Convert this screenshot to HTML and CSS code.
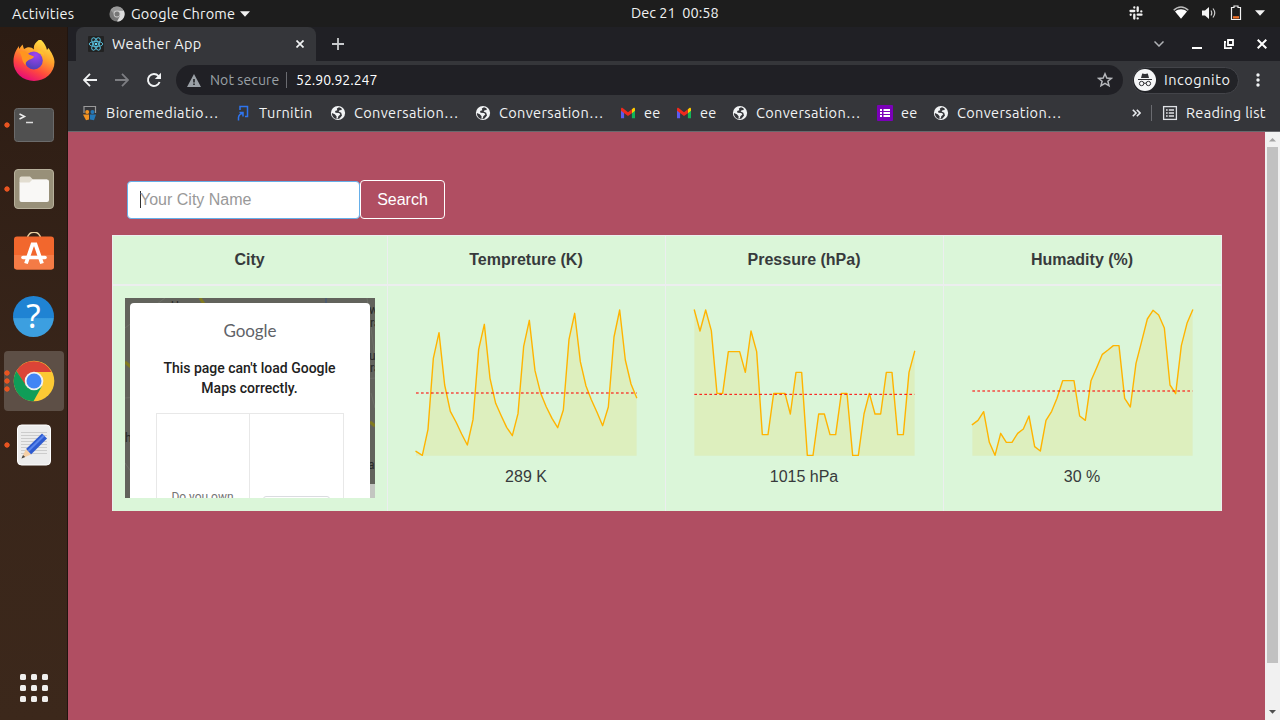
FILE: index.html
```html
<!DOCTYPE html>
<html lang="en">
<head>
<meta charset="utf-8">
<title>Weather App</title>
<link rel="stylesheet" href="styles.css">
</head>
<body>
<svg class="defs" width="0" height="0">
  <defs>
    <symbol id="globe" viewBox="0 0 16 16"><circle cx="8" cy="8" r="7.1" fill="#f1f3f4"/><path d="M9 2.2 6.8 3.6 7.3 5.2 5.1 6 5.4 7.8 9.2 8 10.3 9.6 8.3 11.2 7.8 13.6 6.4 13.8 6.6 11.3 4.8 9.3 1.9 7.9C1.8 11.4 4.4 14.1 8 14.1L9.6 13.4 12 10.6 11.2 7.8 8.6 6.5 9.6 5.3 11.8 5 11.4 3.2Z" fill="#35363a"/></symbol>
    <symbol id="gmail" viewBox="0 0 16 16"><path d="M1 4.2V13.2H4.1V7Z" fill="#5b5bf0"/><path d="M15 4.2V13.2H11.9V7Z" fill="#12b45a"/><path d="M11.9 4.2 13.4 3C14.2 2.5 15 3 15 4V5.8L11.9 8.2Z" fill="#fc0"/><path d="M1 4C1 3 1.8 2.5 2.6 3L8 7.2 11.9 4.2V8.2L8 11.1 1 5.8Z" fill="#f02a1d"/></symbol>
    <symbol id="chrome" viewBox="0 0 42 42"><circle cx="21" cy="21" r="20.3" fill="#fcc934"/><path d="M3.4 10.9A20.3 20.3 0 0 1 38.6 11.9L21 12 12.5 25.5Z" fill="#db4437"/><path d="M3.4 10.9A20.3 20.3 0 0 0 20.5 41.3L29 26 21 30 13 25.5Z" fill="#0f9d58"/><circle cx="21" cy="21" r="9.3" fill="#f1f1f1"/><circle cx="21" cy="21" r="7.5" fill="#4285f4"/></symbol>
  </defs>
</svg>
<div class="desktop">
  <header class="topbar">
    <span class="activities">Activities</span>
    <svg class="app-icon" width="16" height="16" viewBox="0 0 16 16"><circle cx="8" cy="8" r="7.6" fill="#777"/><path d="M8 4.5H14.8A7.6 7.6 0 0 1 8 15.6L11 10Z" fill="#ddd"/><path d="M1.500 4A7.6 7.6 0 0 1 14.6 4.4H8L5 8Z" fill="#999"/><circle cx="8" cy="8" r="3.4" fill="#ccc"/><circle cx="8" cy="8" r="2.5" fill="#777"/></svg>
    <span class="app-name">Google Chrome</span>
    <svg class="caret" width="10" height="6" viewBox="0 0 10 6"><path d="M0 .3H10L5 5.8Z" fill="#f2f2f2"/></svg>
    <span class="clock">Dec 21&nbsp; 00:58</span>
    <div class="tray">
      <svg width="14" height="14" viewBox="0 0 14 14" stroke="#f2f2f2" stroke-width="2.3" stroke-linecap="round" fill="none"><path d="M5.300 1.500V1.600M5.300 5H1.500M8.700 1.500V5M12.300 5.300V5.400M1.700 8.700V8.800M5.300 8.700V12.500M8.700 8.700H12.500M8.700 12.300V12.400"/></svg>
      <svg class="wifi" width="16" height="14" viewBox="0 0 16 14"><path d="M.7 4.3C5-.1 11-.1 15.3 4.3" fill="none" stroke="#bbb" stroke-width="1.4"/><path d="M2 5.5C5.5 2.6 10.5 2.6 14 5.5L8 12.700Z" fill="#fff"/></svg>
      <svg class="vol" width="16" height="14" viewBox="0 0 16 14"><path d="M1 4.5H4L8 1V13L4 9.500H1Z" fill="#f4f4f4"/><path d="M10 4.5Q11.5 7 10 9.500M12 2.500Q15.500 7 12 11.500" fill="none" stroke="#ccc" stroke-width="1.2"/></svg>
      <svg class="bat" width="12" height="16" viewBox="0 0 12 16"><path d="M1.500 2.500H4V1H8V2.500H10.500V14.500H1.500Z" fill="none" stroke="#f2f2f2" stroke-width="1.2"/><path d="M3 11.200H9V13.500H3Z" fill="#f37329"/></svg>
      <svg class="caret" width="10" height="6" viewBox="0 0 10 6"><path d="M0 .3H10L5 5.8Z" fill="#f2f2f2"/></svg>
    </div>
  </header>
  <div class="workspace">
    <nav class="dock">
      <div class="slot"><svg width="42" height="42" viewBox="0 0 42 42">
        <defs><linearGradient id="ff" x1=".8" y1="0" x2=".3" y2="1"><stop offset="0" stop-color="#fff04a"/><stop offset=".4" stop-color="#ffa12b"/><stop offset=".7" stop-color="#ff4a3d"/><stop offset="1" stop-color="#e4067d"/></linearGradient><radialGradient id="fp" cx=".6" cy=".2" r=".8"><stop offset="0" stop-color="#a044f0"/><stop offset="1" stop-color="#5040b8"/></radialGradient></defs>
        <path d="M27 -1C31 2 33 6 34 10L35.500 8C38 12 41.500 17 41.500 22A20.500 19 0 0 1 .5 22C.3 15 3 10 6 6V9L9.500 4.500 11 9 14 7.500C17 7 19 7.500 21 9.500 20 5 23 2 27 -1Z" fill="url(#ff)"/><circle cx="20.8" cy="20.500" r="9" fill="url(#fp)"/><path d="M6 11.500C11 10.500 14 11.500 16 14.500L21 16.500C20 19.500 17 18.500 15 20.500 13 21.500 12 23.500 13 25.500 8 21.500 10 16.500 6 11.500Z" fill="#ff951f"/><path d="M23 11C27 9 31 12 31 16 30 14 28 13 26 13Z" fill="#ffc22f"/></svg></div>
      <div class="slot run1"><svg width="42" height="42" viewBox="0 0 42 42"><rect x="1.5" y="4.5" width="39" height="33" rx="3" fill="#505050" stroke="#6b6b6b"/><path d="M6.500 10 11.500 12.500 6.500 15" fill="none" stroke="#eee" stroke-width="1.5"/><path d="M13 18.500H20" stroke="#ddd" stroke-width="1.5"/></svg></div>
      <div class="slot run1"><svg width="42" height="42" viewBox="0 0 42 42"><rect x="1.5" y="1.5" width="39" height="39" rx="3.5" fill="#989079" stroke="#b7b09b"/><path d="M6.500 13V10.500Q6.500 8.500 8.500 8.500H17L20 11.500H34V15H6.500Z" fill="#e2ddd0"/><path d="M6.500 14.500H16.500L19.500 11.500H34Q36 11.500 36 13.500V32Q36 34 34 34H8.500Q6.500 34 6.500 32Z" fill="#f9f8f6"/></svg></div>
      <div class="slot"><svg width="42" height="42" viewBox="0 0 42 42"><path d="M14.500 7C14 -2 28 -2 27.500 7" fill="none" stroke="#e8cfa0" stroke-width="1.5"/><rect x="1" y="4.5" width="40" height="33" rx="3" fill="#f2672d"/><path d="M1 23H41V34.500Q41 37.500 38 37.500H4Q1 37.500 1 34.500Z" fill="#f47b46"/><path d="M13 31.500 19.500 12.500H22.500L29 31.500" fill="none" stroke="#fff" stroke-width="3.8"/><path d="M10 25.500H32" stroke="#fff" stroke-width="3.6" stroke-linecap="round"/></svg></div>
      <div class="slot"><div class="help">?</div></div>
      <div class="slot active run3"><svg width="42" height="42"><use href="#chrome"/></svg></div>
      <div class="slot run1"><svg width="42" height="42" viewBox="0 0 42 42"><rect x="4.5" y="1" width="33" height="40" rx="4" fill="#ececec" stroke="#fff"/><path d="M8 8.500H34M8 11.500H34M8 14.500H34M8 17.500H34M8 20.500H34M8 23.500H34M8 26.500H34M8 29.500H34" stroke="#c4c4c4" stroke-width=".8"/><path d="M13 25 29 9.500 34 14.500 18 30.500Z" fill="#2e5bd0"/><path d="M15 27.200 31 11.500" stroke="#5a85ec" stroke-width="2"/><path d="M13 25 18 30.500 8.500 34.500Z" fill="#f5cfa6"/><path d="M8.500 34.500 10 31 12.200 33Z" fill="#444"/></svg></div>
      <svg class="apps" width="28" height="28" viewBox="0 0 28 28" fill="#f0efed"><rect width="6" height="6" rx="1.5"/><rect x="11" width="6" height="6" rx="1.5"/><rect x="22" width="6" height="6" rx="1.5"/><rect y="11" width="6" height="6" rx="1.5"/><rect x="11" y="11" width="6" height="6" rx="1.5"/><rect x="22" y="11" width="6" height="6" rx="1.5"/><rect y="22" width="6" height="6" rx="1.5"/><rect x="11" y="22" width="6" height="6" rx="1.5"/><rect x="22" y="22" width="6" height="6" rx="1.5"/></svg>
    </nav>
    <main class="browser">
      <div class="tabstrip">
        <div class="tab">
          <svg width="16" height="16" viewBox="0 0 16 16"><rect width="16" height="16" rx="1" fill="#222"/><g fill="none" stroke="#56b8d4" stroke-width="1"><ellipse cx="8" cy="8" rx="6.8" ry="2.6"/><ellipse cx="8" cy="8" rx="6.8" ry="2.6" transform="rotate(60 8 8)"/><ellipse cx="8" cy="8" rx="6.8" ry="2.6" transform="rotate(120 8 8)"/></g><circle cx="8" cy="8" r="1.3" fill="#61dafb"/></svg>
          <span class="tab-title">Weather App</span>
          <svg width="8" height="8" viewBox="0 0 8 8"><path d="M.5.5 7.500 7.500M7.500.5.5 7.500" stroke="#f1f3f4" stroke-width="1.7"/></svg>
        </div>
        <svg class="newtab" width="12" height="12" viewBox="0 0 12 12"><path d="M6 0V12M0 6H12" stroke="#c8cacd" stroke-width="1.8"/></svg>
        <div class="wincontrols">
          <svg width="10" height="6" viewBox="0 0 10 6"><path d="M.5.5 5 5 9.500.5" fill="none" stroke="#b0b2b6" stroke-width="1.5"/></svg>
          <svg width="10" height="10" viewBox="0 0 10 10"><path d="M0 9H10" stroke="#fff" stroke-width="2"/></svg>
          <svg width="10" height="10" viewBox="0 0 10 10"><path d="M4 1H9V6H4ZM2 3H.8V9.200H7V8" fill="none" stroke="#fff" stroke-width="1.8"/></svg>
          <svg width="10" height="10" viewBox="0 0 10 10"><path d="M.7.7 9.300 9.300M9.300.7.7 9.300" stroke="#fff" stroke-width="2"/></svg>
        </div>
      </div>
      <div class="toolbar">
        <svg width="14" height="14" viewBox="0 0 14 14"><path d="M14 7H1.500M7 .8.9 7 7 13.200" fill="none" stroke="#f1f3f4" stroke-width="1.8"/></svg>
        <svg width="14" height="14" viewBox="0 0 14 14"><path d="M0 7H12.500M7 .8 13.100 7 7 13.200" fill="none" stroke="#7d7e82" stroke-width="1.8"/></svg>
        <svg width="16" height="16" viewBox="0 0 16 16"><path d="M13.600 10A6 6 0 1 1 12.500 4L14 5.500" fill="none" stroke="#f1f3f4" stroke-width="1.9"/><path d="M15 .8V7H8.800Z" fill="#f1f3f4"/></svg>
        <div class="omnibox">
          <svg width="14" height="13" viewBox="0 0 14 13"><path d="M7 0 14 13H0Z" fill="#9aa0a6"/><path d="M6.200 5H7.800V8.500H6.200ZM6.200 9.500H7.800V11H6.200Z" fill="#202124"/></svg>
          <span class="notsecure">Not secure</span><i class="bar"></i><span class="url">52.90.92.247</span>
          <svg class="star" width="16" height="16" viewBox="0 0 16 16"><path d="M8 1.800 9.800 6 14.300 6.400 10.900 9.300 12 13.800 8 11.400 4 13.800 5.100 9.300 1.700 6.400 6.200 6Z" fill="none" stroke="#b6b8bc" stroke-width="1.5"/></svg>
        </div>
        <div class="incog"><svg width="22" height="22" viewBox="0 0 22 22"><circle cx="11" cy="11" r="11" fill="#f5f6f7"/><path d="M7 9 8.200 4.600 11 5 13.800 4.600 15 9Z" fill="#303135"/><path d="M4 10.500H18" stroke="#303135" stroke-width="1"/><g fill="none" stroke="#303135"><circle cx="7.6" cy="14.5" r="2.2"/><circle cx="14.4" cy="14.5" r="2.2"/><path d="M9.800 14.200H12.200"/></g></svg><span>Incognito</span></div>
        <svg class="kebab" width="4" height="14" viewBox="0 0 4 14" fill="#f1f3f4"><circle cx="2" cy="2" r="1.7"/><circle cx="2" cy="7" r="1.7"/><circle cx="2" cy="12" r="1.7"/></svg>
      </div>
      <div class="bookmarks">
        <div class="bm"><svg width="16" height="16" viewBox="0 0 16 16"><path d="M2 8V1.500H13.500V8" fill="none" stroke="#9a9a9a" stroke-width="1.2"/><circle cx="5.2" cy="7" r="2" fill="#f39322"/><path d="M1 9.500H7V14.500L4 15.200Z" fill="#f39322"/><circle cx="10.5" cy="7" r="2" fill="#2378b9"/><path d="M8 9.500H14L12 15.200 8 14.500Z" fill="#2378b9"/></svg><span class="wide">Bioremediatio…</span></div>
        <div class="bm"><svg width="16" height="16" viewBox="0 0 16 16" fill="none" stroke="#2f75ee" stroke-width="1.5"><path d="M5 5V1.500H12.500V11.500H10M3.500 15.500V12.500Q4 9 7.500 8.500M4.500 7.500H8V11.500"/></svg><span>Turnitin</span></div>
        <div class="bm"><svg width="16" height="16"><use href="#globe"/></svg><span>Conversation…</span></div>
        <div class="bm"><svg width="16" height="16"><use href="#globe"/></svg><span>Conversation…</span></div>
        <div class="bm"><svg width="16" height="16"><use href="#gmail"/></svg><span>ee</span></div>
        <div class="bm"><svg width="16" height="16"><use href="#gmail"/></svg><span>ee</span></div>
        <div class="bm"><svg width="16" height="16"><use href="#globe"/></svg><span>Conversation…</span></div>
        <div class="bm"><svg width="16" height="16" viewBox="0 0 16 16"><rect width="16" height="16" rx="1" fill="#7a00b8"/><path d="M3 5H5M6.500 5H13M3 8H5M6.500 8H13M3 11H5M6.500 11H13" stroke="#fff" stroke-width="1.9"/></svg><span>ee</span></div>
        <div class="bm"><svg width="16" height="16"><use href="#globe"/></svg><span>Conversation…</span></div>
        <svg class="more" width="9" height="8" viewBox="0 0 9 8"><path d="M.8.8 4 4 .8 7.200M4.800.8 8 4 4.800 7.200" fill="none" stroke="#e8eaed" stroke-width="1.6"/></svg>
        <i class="bar"></i>
        <div class="bm"><svg width="16" height="16" viewBox="0 0 16 16"><rect x="1.6" y="1.6" width="12.8" height="12.8" fill="none" stroke="#dfe1e5" stroke-width="1.3"/><path d="M4 5H5.700M6.800 5H12M4 8H5.700M6.800 8H12M4 11H5.700M6.800 11H12" stroke="#dfe1e5" stroke-width="1.4"/></svg><span>Reading list</span></div>
      </div>
      <div class="viewport">
        <div class="page">
          <form class="search"><div class="input"><i class="cursor"></i><span>Your City Name</span></div><button type="button">Search</button></form>
          <div class="table">
            <div class="th">City</div><div class="th">Tempreture (K)</div><div class="th">Pressure (hPa)</div><div class="th">Humadity (%)</div>
            <div class="td">
              <div class="map">
                <svg width="250" height="200" viewBox="0 0 250 200"><rect width="250" height="200" fill="#62635c"/><path d="M0 30 40 0M0 100 250 80M242 0 250 60M0 165 7 175M246 95 250 110" stroke="#6e7068" fill="none"/><path d="M75 0 79 6M0 64 6 69M245 124 250 128" stroke="#807a20" stroke-width="3"/><path d="M201 0V6" stroke="#3a5580"/><g font-family="Roboto,sans-serif" font-size="12" fill="#292a29"><text x="46" y="12">Up</text><text x="0" y="144">h</text><text x="244" y="16">w</text><text x="245" y="29">ra</text><text x="244" y="62">ur</text><text x="245" y="74">ra</text><text x="243" y="171">a</text></g><path d="M244 186H250V200H244Z" fill="#c3c6c1"/></svg>
                <div class="dialog">
                  <div class="glogo">Google</div>
                  <div class="msg">This page can't load Google Maps correctly.</div>
                  <div class="opts"><div class="own">Do you own</div><div class="ok"><i></i></div></div>
                </div>
              </div>
            </div>
            <div class="td">
              <svg class="chart" viewBox="30 39 759 495"><path class="area" d="M78 499 97 511 114 433 130 220 147 143 164 300 181 379 198 411 215 447 232 480 249 404 266 193 283 118 300 280 317 355 334 393 350 427 367 452 384 386 401 184 418 106 435 257 452 325 469 366 486 400 503 428 520 375 537 163 554 85 571 230 588 303 604 344 621 382 638 422 655 366 672 156 689 75 706 225 723 297 740 338V512H78Z"/><path class="line" d="M78 499 97 511 114 433 130 220 147 143 164 300 181 379 198 411 215 447 232 480 249 404 266 193 283 118 300 280 317 355 334 393 350 427 367 452 384 386 401 184 418 106 435 257 452 325 469 366 486 400 503 428 520 375 537 163 554 85 571 230 588 303 604 344 621 382 638 422 655 366 672 156 689 75 706 225 723 297 740 338"/><path class="ref" d="M78 324H740"/></svg>
              <div>289 K</div>
            </div>
            <div class="td">
              <svg class="chart" viewBox="39 39 759 495"><path class="area" d="M88 75 105 138 122 75 139 137 156 325H173L190 200H224L241 262 258 138 275 200 292 449H309L326 325H360L376 387 393 262H410L427 511H444L461 387H478L495 449H512L529 325H546L563 511H580L597 387 613 325 630 387H647L664 262H681L698 449H715L732 262 749 199V512H88Z"/><path class="line" d="M88 75 105 138 122 75 139 137 156 325H173L190 200H224L241 262 258 138 275 200 292 449H309L326 325H360L376 387 393 262H410L427 511H444L461 387H478L495 449H512L529 325H546L563 511H580L597 387 613 325 630 387H647L664 262H681L698 449H715L732 262 749 199"/><path class="ref solid" d="M88 328H749"/></svg>
              <div>1015 hPa</div>
            </div>
            <div class="td">
              <svg class="chart" viewBox="48 39 759 495"><path class="area" d="M97 419 114 406 131 380 148 472 165 511 182 445 199 472H216L233 445 250 432 267 393 284 485 301 498 318 406 335 379 351 340 368 287H402L419 393 436 406 453 287 470 248 487 208 504 195 520 182H537L554 340 571 366 588 235 605 169 622 102 639 76 656 90 673 129 690 300 707 326 724 182 741 115 758 75V512H97Z"/><path class="line" d="M97 419 114 406 131 380 148 472 165 511 182 445 199 472H216L233 445 250 432 267 393 284 485 301 498 318 406 335 379 351 340 368 287H402L419 393 436 406 453 287 470 248 487 208 504 195 520 182H537L554 340 571 366 588 235 605 169 622 102 639 76 656 90 673 129 690 300 707 326 724 182 741 115 758 75"/><path class="ref" d="M97 318H758"/></svg>
              <div>30 %</div>
            </div>
          </div>
        </div>
        <div class="scrollbar"><svg width="15" height="15"><path d="M4 9.500H11L7.500 6Z" fill="#a3a3a3"/></svg><div class="thumb"></div><svg width="15" height="15"><path d="M4 5H11L7.500 8.800Z" fill="#505050"/></svg></div>
      </div>
    </main>
  </div>
</div>
</body>
</html>
```
FILE: styles.css
```css
* { box-sizing: border-box; }
body { margin: 0; overflow: hidden; font-family: Ubuntu, "Noto Sans", sans-serif; font-size: 14.5px; color: #f1f3f4; }
svg { display: block; flex: none; }
.defs { position: absolute; }
.desktop { width: 1280px; height: 720px; display: flex; flex-direction: column; }
.topbar { height: 27px; flex: none; background: #1d1d1d; display: flex; align-items: center; white-space: nowrap; }
.topbar span { padding-bottom: 1px; }
.activities { width: 97px; padding-left: 12px; letter-spacing: .3px; }
.app-icon { margin: 0 6px 0 12px; }
.app-name { width: 105px; margin-right: 4px; letter-spacing: .2px; }
.topbar .clock { margin-left: 381px; width: 90px; padding-bottom: 2px; }
.tray { margin-left: auto; padding: 0 16px 1px 0; display: flex; align-items: center; }
.tray .caret { margin-left: 13px; margin-right: -1px; }
.wifi { margin-left: 30px; }
.vol { margin-left: 12px; }
.bat { margin-left: 13px; }
.workspace { flex: 1; display: flex; min-height: 0; }
.dock { width: 68px; flex: none; background: linear-gradient(#2c1c13, #38251a 50%, #3c281b); border-right: 1px solid #21150f; padding: 4px 3px 18px 4px; display: flex; flex-direction: column; gap: 4px; }
.slot { width: 60px; height: 60px; display: grid; place-items: center; border-radius: 4px; background-repeat: no-repeat; }
.run1 { background-image: radial-gradient(circle at 3px 30px, #e95420 2.3px, transparent 3px); }
.active { background-color: #5d4f46; }
.run3 { background-image: radial-gradient(circle at 3px 22px, #e95420 2.3px, transparent 3px), radial-gradient(circle at 3px 30px, #e95420 2.3px, transparent 3px), radial-gradient(circle at 3px 38px, #e95420 2.3px, transparent 3px); }
.help { width: 41px; height: 41px; border-radius: 50%; background: linear-gradient(#1f83d3 54%, #3c9fe0 55%); font: 33px/40px "Noto Sans", sans-serif; color: #fff; text-align: center; margin: 0 1px 1px 0; }
.apps { margin: auto 0 0 16px; }
.browser { flex: 1; min-width: 0; display: flex; flex-direction: column; background: #35363a; }
.tabstrip { height: 34px; flex: none; background: #202025; display: flex; align-items: center; padding-left: 8px; }
.tab { width: 240px; height: 34px; padding: 0 12px; border-radius: 8px 8px 0 0; background: #35363a; display: flex; align-items: center; gap: 8px; }
.tab-title { flex: 1; letter-spacing: .35px; padding-bottom: 2px; }
.newtab { margin-left: 16px; }
.wincontrols { margin-left: auto; display: flex; align-items: center; gap: 23px; padding-right: 13px; }
.wincontrols svg:first-child { margin-right: 5px; }
.wincontrols svg:nth-child(2) { margin-right: -1px; }
.toolbar { height: 38px; flex: none; display: flex; align-items: center; padding-left: 15px; }
.toolbar > svg { margin-right: 18px; }
.toolbar > svg:nth-child(3) { margin: 0 14px 0 -1px; }
.omnibox { width: 947px; height: 30px; border-radius: 15px; background: #202025; display: flex; align-items: center; padding: 0 10px 0 11px; font-size: 14px; }
.notsecure { width: 76px; margin-left: 9px; color: #9aa0a6; white-space: nowrap; letter-spacing: .1px; }
.bar { width: 1px; height: 16px; background: #6a6b70; }
.url { margin-left: 9px; color: #fff; }
.star { margin-left: auto; }
.incog { width: 107px; height: 27px; margin-left: 9px; border: 1px solid #434449; border-radius: 14px; background: #222327; display: flex; align-items: center; gap: 8px; padding-left: 1px; letter-spacing: .55px; }
.incog span { padding-bottom: 2px; }
.toolbar > .kebab { margin: 0 0 0 17px; }
.bookmarks { height: 33px; flex: none; border-bottom: 1px solid #68696d; padding: 0 0 4px 14px; display: grid; grid-template-columns: 153px 95px 145px 145px 56px 56px 145px 56px 199px 19px 11px 1fr; align-items: center; }
.bm { display: flex; align-items: center; gap: 8px; white-space: nowrap; }
.bm span { padding-bottom: 2px; letter-spacing: .35px; }
.bm .wide { letter-spacing: .43px; }
.bm svg, .more { margin-bottom: 1px; }
.viewport { flex: 1; display: flex; min-height: 0; }
.page { width: 1197px; background: #b04e62; padding: 48px 43px 0 44px; font-family: "Liberation Sans", Arial, sans-serif; font-size: 16px; color: #373a3c; }
.search { display: flex; align-items: center; margin: 0 0 16px 15px; }
.input { width: 233px; height: 38px; margin-top: 1px; background: #fff; border: 1px solid #66afe9; border-radius: 4px; padding-left: 12px; display: flex; align-items: center; color: #999; }
.cursor { width: 1px; height: 17px; background: #333; margin: 0 -1px 2px 0; }
.search button { width: 85px; height: 39px; padding: 0; border: 1px solid #fff; border-radius: 4px; background: transparent; color: #fff; font: 16px "Liberation Sans", Arial, sans-serif; }
.table { display: grid; grid-template-columns: 276px 278px 278px 278px; grid-template-rows: 50px 225px; background: #dbf6d9; border-top: 1px solid #eceeef; height: 276px; text-align: center; }
.th, .td { border-right: 1px solid #eceeef; }
.th { font-weight: bold; line-height: 24px; padding: 12px 1px 0 0; border-bottom: 2px solid #eceeef; }
.td { padding: 12px 13px 12px 12px; line-height: 24px; }
.th:nth-child(4n+1), .td:nth-child(4n+1) { border-left: 1px solid #eceeef; }
.map { width: 250px; height: 200px; display: grid; overflow: hidden; }
.map > * { grid-area: 1 / 1; }
.dialog { width: 240px; height: 230px; margin: 5px; border-radius: 4px 4px 0 0; background: #fff; padding: 16px 26px; font-family: Roboto, sans-serif; z-index: 1; }
.glogo { height: 22px; font: 17px/24px Lato, sans-serif; color: #5f6368; letter-spacing: -.1px; }
.msg { margin: 17px 0 0 -1px; font-size: 14px; line-height: 20px; font-weight: 500; color: #212121; }
.opts { margin-top: 15px; height: 160px; border: 1px solid #e8e8e8; display: grid; grid-template-columns: 93px 1fr; font-size: 12px; color: #757575; }
.own { border-right: 1px solid #e8e8e8; padding: 71px 1px 0 0; }
.ok { padding: 82px 13px; }
.ok i { display: block; height: 24px; border: 1px solid #dadce0; border-radius: 3px; }
.chart { width: 253px; height: 165px; margin-bottom: 2px; }
.area { fill: #f0c000; fill-opacity: .12; }
.line { fill: none; stroke: #ffb400; stroke-width: 4.2; stroke-linejoin: round; stroke-linecap: round; }
.ref { fill: none; stroke: red; stroke-opacity: .7; stroke-width: 4.2; stroke-dasharray: 8 7; }
.solid { stroke-width: 3; stroke-opacity: 1; }
.scrollbar { width: 15px; background: #f1f1f1; display: flex; flex-direction: column; }
.thumb { height: 516px; margin: 0 2px; background: #c1c1c1; }
.scrollbar svg:last-child { margin-top: auto; }
```
